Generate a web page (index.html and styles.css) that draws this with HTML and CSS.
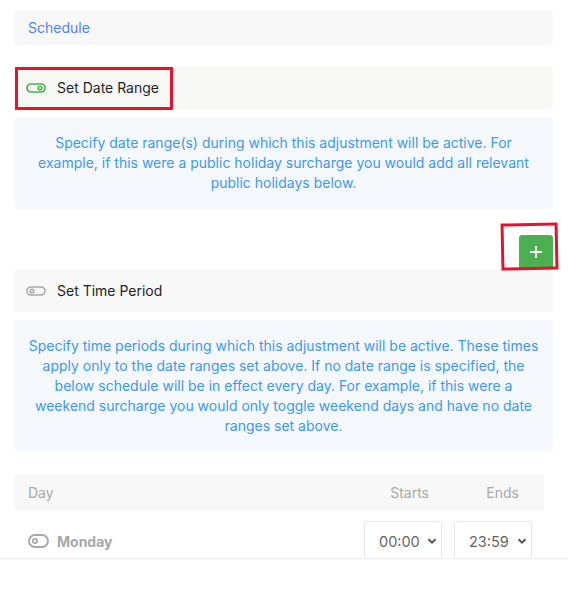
FILE: index.html
```html
<!DOCTYPE html>
<html>
<head>
<meta charset="utf-8">
<link rel="stylesheet" href="styles.css">
</head>
<body>
<div class="page">
  <div class="card schedule">Schedule</div>

  <div class="card section section-date">
    <svg class="toggle on" viewBox="0 0 20 10" width="20" height="10"><rect x="1" y="1" width="18" height="8" rx="4" fill="none" stroke="currentColor" stroke-width="1.7"/><circle cx="14" cy="5" r="1.8" fill="none" stroke="currentColor" stroke-width="1.6"/></svg>
    <span class="section-title">Set Date Range</span>
  </div>

  <div class="info">Specify date range(s) during which this adjustment will be active. For example, if this were a public holiday surcharge you would add all relevant public holidays below.</div>

  <div class="add-row">
    <button class="add-btn"><svg viewBox="0 0 14 14" width="14" height="14"><path d="M7 1v12M1 7h12" stroke="#fff" stroke-width="1.8"/></svg></button>
  </div>

  <div class="card section">
    <svg class="toggle off" viewBox="0 0 20 10" width="20" height="10"><rect x="1" y="1" width="18" height="8" rx="4" fill="none" stroke="currentColor" stroke-width="1.6"/><circle cx="6" cy="5" r="1.8" fill="none" stroke="currentColor" stroke-width="1.5"/></svg>
    <span class="section-title">Set Time Period</span>
  </div>

  <div class="info">Specify time periods during which this adjustment will be active. These times apply only to the date ranges set above. If no date range is specified, the below schedule will be in effect every day. For example, if this were a weekend surcharge you would only toggle weekend days and have no date ranges set above.</div>

  <div class="table">
    <div class="thead grid">
      <div>Day</div>
      <div class="th-r">Starts</div>
      <div class="th-r">Ends</div>
    </div>
    <div class="trow grid">
      <div class="day">
        <svg class="toggle day-toggle" viewBox="0 0 21 14" width="21" height="14"><rect x="1" y="1" width="19" height="12" rx="6" fill="none" stroke="currentColor" stroke-width="1.9"/><circle cx="7" cy="7" r="2.2" fill="none" stroke="currentColor" stroke-width="1.7"/></svg>
        <span>Monday</span>
      </div>
      <div class="select"><span>00:00</span><svg viewBox="0 0 10 6" width="10" height="6"><path d="M1.5 1.2L5 4.6l3.5-3.4" fill="none" stroke="#555" stroke-width="1.9"/></svg></div>
      <div class="select"><span>23:59</span><svg viewBox="0 0 10 6" width="10" height="6"><path d="M1.5 1.2L5 4.6l3.5-3.4" fill="none" stroke="#555" stroke-width="1.9"/></svg></div>
    </div>
  </div>
</div>

<div class="mark mark-date"></div>
<div class="mark mark-add"></div>
<div class="footer"></div>
</body>
</html>
```
FILE: styles.css
```css
* { box-sizing: border-box; }
html, body { margin: 0; padding: 0; background: #fff; }
body {
  font-family: Inter, "Open Sans", "Liberation Sans", sans-serif;
  font-size: 14px;
  color: #222;
  width: 568px;
  height: 612px;
  overflow: hidden;
}
.page {
  padding: 10px 15px 0 14px;
  display: flex;
  flex-direction: column;
}
.card {
  background: #f8f8f8;
  border-radius: 4px;
}
.schedule {
  height: 35px;
  display: flex;
  align-items: center;
  padding-left: 14px;
  color: #4f82f2;
}
.section {
  height: 43px;
  display: flex;
  align-items: center;
  padding-left: 12px;
  gap: 11px;
}
.section-date {
  margin-top: 21px;
  background: #f8f9f7;
}
.section-title { color: #1f1f1f; }
.toggle { display: block; }
.toggle.on { color: #4caf50; }
.toggle.off { color: #a8a8a8; }
.info {
  margin-top: 8px;
  background: #f5f9fd;
  border-radius: 4px;
  color: #3d98ee;
  text-align: center;
  line-height: 20px;
  padding: 16px 14px;
}
.add-row {
  margin-top: 26px;
  display: flex;
  justify-content: flex-end;
}
.add-btn {
  width: 34px;
  height: 33px;
  border: 0;
  padding: 0;
  background: #4caf50;
  border-radius: 3px 3px 0 0;
  display: flex;
  align-items: center;
  justify-content: center;
}
.add-row + .section { margin-top: 1px; }
.table {
  margin-top: 22px;
  width: 530px;
}
.grid {
  display: grid;
  grid-template-columns: 1fr 78px 78px;
  column-gap: 12px;
  padding: 0 12px 0 14px;
  align-items: center;
}
.thead {
  height: 37px;
  background: #f8f8f8;
  border-radius: 4px;
  color: #a8a8a8;
}
.th-r { text-align: right; padding-right: 13px; }
.trow {
  margin-top: 10px;
  height: 40px;
}
.day {
  display: flex;
  align-items: center;
  gap: 8px;
  color: #a8a8a8;
  font-weight: 700;
}
.day-toggle { color: #a8a8a8; }
.select {
  height: 40px;
  border: 1px solid #e6e6e6;
  border-radius: 4px;
  display: flex;
  align-items: center;
  justify-content: space-between;
  padding: 0 4px 0 14px;
  color: #666;
  font-size: 14.5px;
}
.mark {
  position: absolute;
  border: 3px solid #e3142e;
}
.mark-date {
  left: 15px;
  top: 67px;
  width: 158px;
  height: 43px;
}
.mark-add {
  left: 501px;
  top: 223px;
  width: 57px;
  height: 47px;
  transform: rotate(-1.2deg);
}
.footer {
  position: fixed;
  left: 0;
  right: 0;
  bottom: 0;
  height: 54px;
  background: #fff;
  border-top: 1px solid #ececec;
}
```
